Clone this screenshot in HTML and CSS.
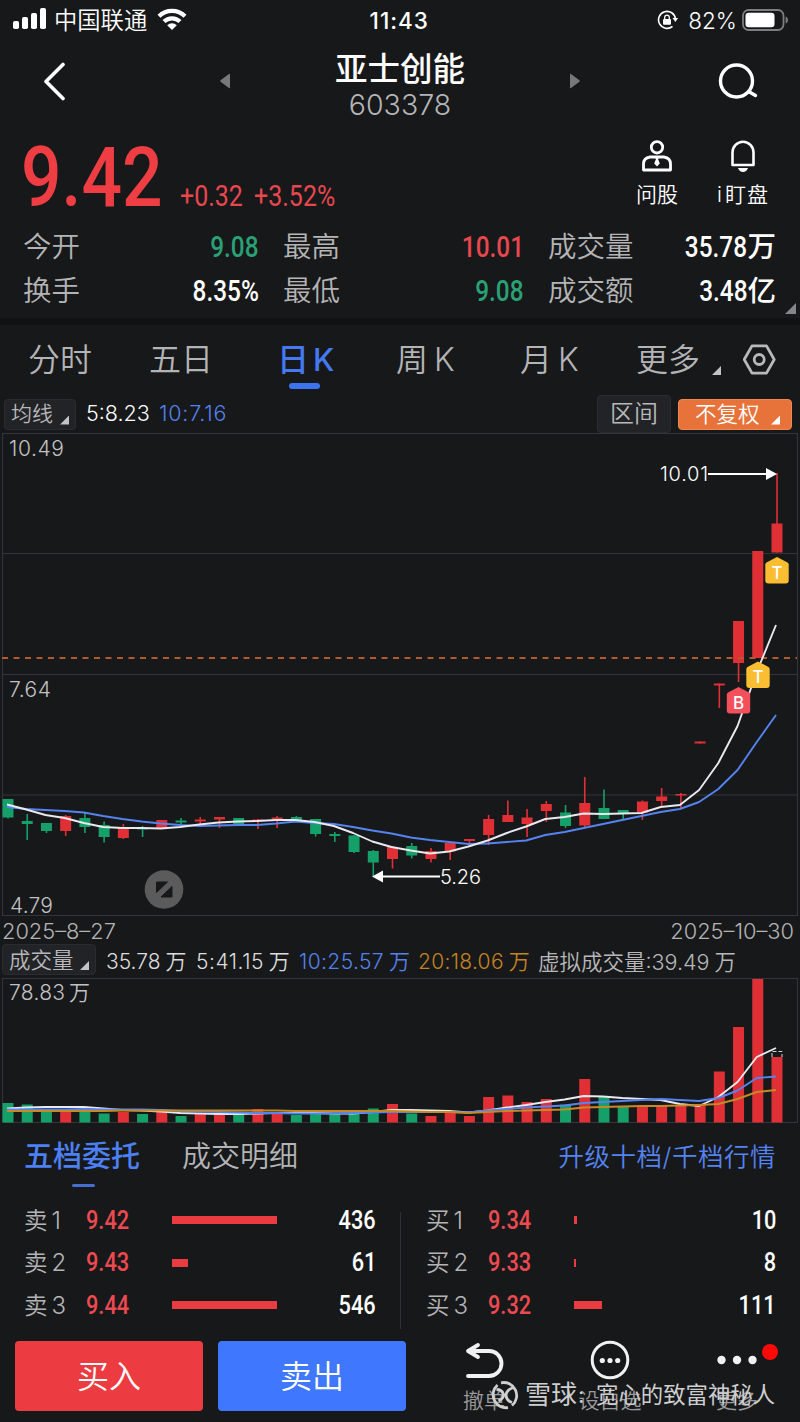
FILE: index.html
```
<!DOCTYPE html>
<html lang="zh-CN">

<head>
  <meta charset="UTF-8">
  <meta name="viewport" content="width=device-width, initial-scale=1.0">
  <title>亚士创能 603378</title>
  <link rel="stylesheet" href="styles.css">
</head>

<body>
  <div class="status-bar">
    <svg class="signal" width="34" height="22" viewBox="0 0 34 22" fill="#fff">
      <rect x="0" y="13" width="6" height="8" rx="1.8" />
      <rect x="9" y="9" width="6" height="12" rx="1.8" />
      <rect x="18" y="5" width="6" height="16" rx="1.8" />
      <rect x="27" y="0" width="6" height="21" rx="1.8" />
    </svg>
    <span class="carrier">中国联通</span>
    <svg class="wifi" width="30" height="23" viewBox="0 0 30 23" fill="none" stroke="#fff" stroke-width="4.2">
      <path d="M2 8.2a18.7 18.7 0 0 1 26 0" />
      <path d="M7 13.6a11.6 11.6 0 0 1 16 0" />
      <path d="M15 22l-4.8-4.8a6.9 6.9 0 0 1 9.6 0z" fill="#fff" stroke="none" />
    </svg>
    <span class="clock">11:43</span>
    <svg class="rotation-lock" width="21" height="20" viewBox="0 0 21 20" fill="none" stroke="#fff" stroke-width="1.6">
      <path d="M18.5 9A8.5 8.5 0 1 0 15.5 16.4" />
      <path d="M15.5 8h5.5l-2.6 4z" fill="#fff" stroke="none" />
      <rect x="6" y="9" width="8" height="5.8" rx="1" fill="#fff" stroke="none" />
      <path d="M7.7 9.5V7.4a2.3 2.3 0 0 1 4.6 0v2.1" stroke-width="1.3" />
    </svg>
    <span class="battery-level">82%</span>
    <svg class="battery" width="47" height="22" viewBox="0 0 47 22">
      <rect x="1" y="1" width="40.5" height="20" rx="5.5" fill="none" stroke="#7c7d7f" stroke-width="1.8" />
      <rect x="3.5" y="3.8" width="29" height="14.4" rx="3.2" fill="#fff" />
      <path d="M43.6 7.5c3.2 1 3.2 6 0 7z" fill="#7c7d7f" />
    </svg>
  </div>

  <header class="header">
    <svg class="back" width="24" height="40" viewBox="0 0 24 40" fill="none" stroke="#fff" stroke-width="3.6" stroke-linecap="round" stroke-linejoin="round">
      <path d="M20 3.500L3 20.500l17 17" />
    </svg>
    <svg class="prev" width="10" height="16" viewBox="0 0 10 16" fill="#77787a"><path d="M10 1.500v13q0 1-1 .4L.6 8.800q-.8-.8 0-1.600L9 1q1-.5 1 .5z" /></svg>
    <div class="stock">
      <h1>亚士创能</h1>
      <div class="code">603378</div>
    </div>
    <svg class="next" width="10" height="16" viewBox="0 0 10 16" fill="#77787a"><path d="M0 1.500v13q0 1 1 .4L9.400 8.800q.8-.8 0-1.600L1 1q-1-.5-1 .5z" /></svg>
    <svg class="search" width="40" height="38" viewBox="0 0 40 38" fill="none" stroke="#fff" stroke-width="3.400" stroke-linecap="round">
      <circle cx="18.500" cy="19" r="16" />
      <path d="M31.500 30l6 3.500" />
    </svg>
  </header>

  <section class="quote">
    <div class="price-row">
      <span class="price din">9.42</span>
      <span class="change din">+0.32 +3.52%</span>
      <div class="quick ask">
        <svg width="32" height="32" viewBox="0 0 32 32" fill="none" stroke="#fff" stroke-width="2.800">
          <circle cx="16" cy="7.300" r="5.700" />
          <path d="M9 17h14q6.500 1 6.500 7v6h-27v-6q0-6 6.500-7z" stroke-linejoin="round" />
          <path d="M14.300 17h3.400l-.6 2.200 1.700 4.300-2.800 3-2.800-3 1.700-4.300z" fill="#fff" stroke="none" />
        </svg>
        <span>问股</span>
      </div>
      <div class="quick watch">
        <svg width="26" height="32" viewBox="0 0 26 32" fill="none" stroke="#fff" stroke-width="2.600">
          <path d="M2.500 25V12.500a10.500 10.800 0 0 1 21 0V25z" stroke-linejoin="round" />
          <path d="M8 28h10q-1.500 4-5 4t-5-4z" fill="#fff" stroke="none" />
        </svg>
        <span>i<em>盯盘</em></span>
      </div>
    </div>
    <dl class="stats">
      <dt>今开</dt><dd class="down"><span class="din">9.08</span></dd>
      <dt>最高</dt><dd class="up"><span class="din">10.01</span></dd>
      <dt>成交量</dt><dd><span class="din">35.78</span>万</dd>
      <dt>换手</dt><dd><span class="din">8.35%</span></dd>
      <dt>最低</dt><dd class="down"><span class="din">9.08</span></dd>
      <dt>成交额</dt><dd><span class="din">3.48</span>亿</dd>
    </dl>
    <i class="corner expand"></i>
  </section>

  <nav class="periods">
    <span>分时</span>
    <span>五日</span>
    <span class="active">日<b>K</b></span>
    <span>周<b>K</b></span>
    <span>月<b>K</b></span>
    <span>更多<i class="corner"></i></span>
    <svg width="34" height="32" viewBox="0 -1 34 32" fill="none" stroke="#b9b9bb" stroke-width="2.800" stroke-linejoin="round">
      <path d="M1.200 14.500L9 .9h14.500l7.700 13.600-7.700 13.600H9z" />
      <circle cx="16.200" cy="14.500" r="5" />
    </svg>
  </nav>

  <div class="ma-bar">
    <button class="chip" type="button">均线<i class="corner"></i></button>
    <span class="ma5">5:8.23</span>
    <span class="ma10">10:7.16</span>
    <button class="chip range" type="button">区间</button>
    <button class="chip adjust" type="button">不复权<i class="corner"></i></button>
  </div>

  <svg class="chart" id="kline" width="800" height="483" viewBox="0 433 800 483"></svg>

  <div class="dates"><span>2025–8–27</span><span>2025–10–30</span></div>

  <div class="vol-bar">
    <button class="chip" type="button">成交量<i class="corner"></i></button>
    <span class="v0">35.78<em>万</em></span>
    <span class="v5">5:41.15<em>万</em></span>
    <span class="v10">10:25.57<em>万</em></span>
    <span class="v20">20:18.06<em>万</em></span>
    <span class="virtual">虚拟成交量:39.49<em>万</em></span>
  </div>

  <svg class="chart" id="volume" width="800" height="145" viewBox="0 978 800 145"></svg>

  <nav class="book-tabs">
    <span class="active">五档委托</span>
    <span class="detail">成交明细</span>
    <a>升级十档/千档行情</a>
  </nav>

  <section class="book">
    <div class="side sell">
      <div class="level"><span>卖<em>1</em></span><span class="din">9.42</span><i class="bar" style="width: 105px"></i><span class="din qty">436</span></div>
      <div class="level"><span>卖<em>2</em></span><span class="din">9.43</span><i class="bar" style="width: 16px"></i><span class="din qty">61</span></div>
      <div class="level"><span>卖<em>3</em></span><span class="din">9.44</span><i class="bar" style="width: 105px"></i><span class="din qty">546</span></div>
    </div>
    <div class="side buy">
      <div class="level"><span>买<em>1</em></span><span class="din">9.34</span><i class="bar" style="width: 3px"></i><span class="din qty">10</span></div>
      <div class="level"><span>买<em>2</em></span><span class="din">9.33</span><i class="bar" style="width: 2px"></i><span class="din qty">8</span></div>
      <div class="level"><span>买<em>3</em></span><span class="din">9.32</span><i class="bar" style="width: 28px"></i><span class="din qty">111</span></div>
    </div>
  </section>

  <footer class="actions">
    <button class="trade buy-btn" type="button">买入</button>
    <button class="trade sell-btn" type="button">卖出</button>
    <div class="tool cancel">
      <svg width="40" height="40" viewBox="0 0 40 40" fill="none" stroke="#f1f1f2" stroke-width="3.800" stroke-linecap="round" stroke-linejoin="round">
        <path d="M14 5L4 11l10 6M4 11h21a12.400 12.400 0 0 1 0 25H4" />
      </svg>
      <span>撤单</span>
    </div>
    <div class="tool settings">
      <svg width="40" height="40" viewBox="0 0 40 40" fill="#f1f1f2">
        <circle cx="20" cy="20" r="17.800" fill="none" stroke="#f1f1f2" stroke-width="3" />
        <circle cx="12.300" cy="20.500" r="2.600" /><circle cx="20" cy="20.500" r="2.600" /><circle cx="27.700" cy="20.500" r="2.600" />
      </svg>
      <span>设自选</span>
    </div>
    <div class="tool more">
      <svg width="62" height="40" viewBox="0 0 62 40" fill="#f1f1f2">
        <circle cx="15.500" cy="20" r="4.200" /><circle cx="31" cy="20" r="4.200" /><circle cx="46.500" cy="20" r="4.200" />
      </svg>
      <i class="dot"></i>
      <span>更多</span>
    </div>
  </footer>

  <div class="watermark">
    <svg width="28" height="30" viewBox="0 0 28 30" fill="none" stroke="currentColor" stroke-width="2.800">
      <path d="M10 2.800A13 13 0 0 1 21 25.500M6.500 5A13 13 0 0 0 17 27.600" />
      <path d="M5.500 9.500q5.500 0 6.800 4.500 1 4-4.800 7M22.500 7.500Q15 10 15 15.500q.5 5 6 7" />
    </svg>
    <span class="brand">雪球</span><span class="colon">:</span><span class="author">宽心的致富神秘人</span>
  </div>

  <script src="script.js"></script>
</body>

</html>
```
FILE: styles.css
```
* {
  box-sizing: border-box;
}

body {
  margin: 0;
  width: 800px;
  height: 1422px;
  overflow: hidden;
  position: relative;
  background: #17181a;
  color: #fff;
  font-family: Inter, "Noto Sans CJK SC", sans-serif;
  font-weight: 350;
}

svg {
  display: block;
  flex: none;
}

i,
em {
  font-style: normal;
}

button {
  font: inherit;
  border: 0;
  padding: 0;
}

/* narrow figures */
.din {
  display: inline-block;
  font-family: Roboto, sans-serif;
  font-weight: 500;
  transform: scaleX(.86);
  transform-origin: left center;
}

.up {
  color: #e8474e;
}

.down {
  color: #2aa175;
}

.corner {
  display: block;
  width: 9px;
  height: 9px;
  background: #c4c4c6;
  clip-path: polygon(100% 0, 100% 100%, 0 100%);
}

/* status bar */
.status-bar {
  height: 40px;
  padding: 0 11px 0 13px;
  display: flex;
  align-items: center;
}

.signal {
  margin-top: -2px;
}

.carrier {
  margin: -2px 0 0 7px;
  width: 96px;
  font-size: 23.300px;
}

.wifi {
  margin-left: 7px;
  margin-top: -1px;
}

.clock {
  margin-left: 183px;
  width: 61px;
  font-size: 22.500px;
  font-weight: 500;
  letter-spacing: 1px;
  white-space: nowrap;
}

.rotation-lock {
  margin-left: 227px;
}

.battery-level {
  margin-left: 10px;
  width: 54px;
  font-size: 22.500px;
  white-space: nowrap;
}

.battery {
  margin-top: -1px;
}

/* title */
.header {
  height: 85px;
  display: flex;
  align-items: center;
  padding: 0 42px 4px 43px;
}

.prev {
  margin-left: 153px;
}

.stock {
  width: 340px;
  margin-top: 11px;
  text-align: center;
}

.stock h1 {
  margin: 0;
  font-size: 32.500px;
  line-height: 38px;
  font-weight: 500;
}

.stock .code {
  font-size: 28.500px;
  font-weight: 300;
  line-height: 32px;
  color: #b5b5b7;
}

.search {
  margin-left: auto;
}

/* quote */
.quote {
  height: 200px;
  border-bottom: 7px solid #111214;
  position: relative;
}

.price-row {
  height: 99px;
  display: flex;
}

.price {
  margin-left: 21px;
  width: 159px;
  font-size: 84px;
  line-height: 105px;
  color: #ee3e43;
  font-weight: 500;
  transform: scaleX(.85);
}

.change {
  width: 188px;
  font-size: 29px;
  line-height: 142px;
  color: #e8474e;
  font-weight: 400;
  word-spacing: 6px;
  transform: scaleX(.86);
  white-space: nowrap;
}

.quick {
  width: 60px;
  padding-top: 15px;
  display: flex;
  flex-direction: column;
  align-items: center;
  font-size: 21px;
  line-height: 28px;
  white-space: nowrap;
}

.quick span {
  margin-top: 9px;
}

.quick em {
  margin-left: 3px;
  letter-spacing: 1px;
}

.ask {
  margin-left: 259px;
}

.watch {
  margin-left: 26px;
}

.stats {
  margin: 0;
  padding: 1px 24px 0 23px;
  display: grid;
  grid-template-columns: 86px 150px 110px 155px 112px 140px;
  grid-template-rows: 44px 44px;
  font-size: 28.500px;
  line-height: 44px;
  white-space: nowrap;
}

.stats dt {
  color: #b4b4b6;
}

.stats dt:not(:nth-of-type(3n + 1)) {
  padding-left: 24px;
}

.stats dd {
  margin: 0;
  text-align: right;
  font-weight: 500;
}

.stats .din {
  font-size: 29px;
  transform: scaleX(.84);
  transform-origin: right center;
}

.expand {
  position: absolute;
  right: 4px;
  bottom: 4px;
  width: 11px;
  height: 11px;
  background: #85868a;
}

/* period tabs */
.periods {
  height: 70px;
  padding-left: 28px;
  display: grid;
  grid-template-columns: 121px 128px 119px 124px 116px 107px 32px;
  align-items: center;
  font-size: 32px;
  color: #b4b4b6;
}

.periods span {
  display: flex;
  position: relative;
  height: 70px;
  line-height: 70px;
}

.periods b {
  margin-left: 6px;
  font-weight: 350;
  font-size: 32px;
}

.periods .active {
  color: #4479f2;
  font-weight: 500;
}

.periods .active b {
  margin-left: 4px;
  font-size: 31px;
  font-weight: 500;
}

.periods .active::after {
  content: "";
  position: absolute;
  left: 12px;
  bottom: 6px;
  width: 31px;
  height: 6px;
  border-radius: 3px;
  background: #3b74ee;
}

.periods .corner {
  margin: 41px 0 0 12px;
}

/* indicator rows */
.chip {
  position: relative;
  display: flex;
  align-items: center;
  height: 31px;
  padding: 0 6px;
  border: 1px solid #2b2c30;
  border-radius: 4px;
  background: #222327;
  color: #b8b8ba;
  font-size: 21px;
  line-height: 28px;
  white-space: nowrap;
}

.chip .corner {
  margin: 12px 0 0 auto;
}

.ma-bar {
  height: 38px;
  padding: 0 8px 0 4px;
  display: flex;
  align-items: center;
  font-size: 21.500px;
}

.ma-bar .chip {
  width: 72px;
}

.ma5,
.ma10 {
  margin-top: -2px;
}

.ma5 {
  margin-left: 10px;
  width: 73px;
}

.ma10 {
  color: #5382ee;
  letter-spacing: .8px;
}

.ma-bar .range {
  margin-left: auto;
  width: 74px;
  height: 38px;
  padding: 0;
  justify-content: center;
  font-size: 24px;
}

.ma-bar .adjust {
  margin-left: 7px;
  width: 114px;
  padding: 0 11px 0 16px;
  border-color: #ee8953;
  background: #e8733a;
  color: #fff;
  font-size: 21.500px;
}

.adjust .corner {
  background: #fff;
}

.dates {
  height: 28px;
  padding: 0 6px 0 2px;
  display: flex;
  justify-content: space-between;
  font-size: 21.800px;
  line-height: 31px;
  color: #b4b4b6;
}

.vol-bar {
  height: 34px;
  padding-left: 2px;
  display: flex;
  font-size: 21px;
  line-height: 36px;
  white-space: nowrap;
}

.vol-bar .chip {
  width: 94px;
  height: 31px;
  margin-right: 10px;
  font-size: 21.500px;
}

.vol-bar span {
  font-size: 21px;
  color: #dcdcde;
}

.vol-bar em {
  margin-left: 5px;
}

.vol-bar .v0 { width: 90px; }
.vol-bar .v5 { width: 103px; letter-spacing: .5px; }
.vol-bar .v10 { width: 119px; letter-spacing: .4px; color: #5382ee; }
.vol-bar .v20 { width: 120px; letter-spacing: .3px; color: #c58322; }
.vol-bar .virtual { color: #b8b8ba; font-size: 21.500px; }

.chart text {
  font-family: Inter, "Noto Sans CJK SC", sans-serif;
  font-size: 21px;
  fill: #c2c2c4;
}

.chart .mark {
  font-size: 20px;
  fill: #fff;
}

.chart .badge {
  font-size: 17px;
  font-weight: 500;
  fill: #fff;
  text-anchor: middle;
}

/* order book */
.book-tabs {
  height: 75px;
  padding: 0 24px;
  display: flex;
  font-size: 29px;
  line-height: 68px;
  color: #b4b4b6;
}

.book-tabs .active {
  position: relative;
  color: #4c80f4;
  font-weight: 500;
}

.book-tabs .active::after {
  content: "";
  position: absolute;
  left: 48px;
  bottom: 11px;
  width: 23px;
  height: 3px;
  border-radius: 2px;
  background: #446fd0;
}

.detail {
  margin-left: 42px;
}

.book-tabs a {
  margin-left: auto;
  font-size: 25.500px;
  letter-spacing: .5px;
  color: #5484f2;
}

.book {
  height: 137px;
  display: flex;
}

.side {
  width: 400px;
  padding: 1px 24px;
}

.buy {
  padding-left: 26px;
  position: relative;
}

.buy::before {
  content: "";
  position: absolute;
  left: 0;
  top: 14px;
  width: 1px;
  height: 117px;
  background: #303134;
}

.level {
  height: 42.500px;
  display: flex;
  align-items: center;
  font-size: 23.500px;
  color: #b4b4b6;
}

.level > span:first-child {
  width: 62px;
  margin-top: -3px;
}

.level em {
  margin-left: 4px;
  font-size: 24px;
}

.level .din {
  width: 86px;
  font-size: 25px;
  color: #ec4a50;
  transform: scaleX(.87);
}

.bar {
  height: 8px;
  background: #ea3c40;
}

.level .qty {
  width: auto;
  margin-left: auto;
  color: #fff;
  transform-origin: right center;
}

/* bottom bar */
.actions {
  height: 87px;
  padding: 6px 0 0 15px;
  display: flex;
}

.trade {
  width: 188px;
  height: 70px;
  margin-right: 15px;
  border-radius: 4px;
  color: #fff;
  font-size: 32px;
  line-height: 72px;
}

.buy-btn {
  background: #ec3c41;
}

.sell-btn {
  background: #3f78ff;
}

.tool {
  position: relative;
  display: flex;
  flex-direction: column;
  align-items: center;
  margin-top: -1px;
  font-size: 21px;
  line-height: 28px;
  color: #9b9b9d;
  white-space: nowrap;
}

.tool span {
  margin-top: 7px;
}

.cancel {
  margin-left: 41px;
  width: 44px;
}

.settings {
  margin-left: 64px;
  width: 80px;
}

.more {
  margin-left: 56px;
  width: 62px;
}

.dot {
  position: absolute;
  right: -10px;
  top: 4px;
  width: 16px;
  height: 16px;
  border-radius: 50%;
  background: #ff0908;
}

.watermark {
  position: absolute;
  left: 491px;
  top: 1380px;
  display: flex;
  align-items: center;
  height: 30px;
  color: #cfcfd0;
  line-height: 26px;
  font-weight: 400;
  white-space: nowrap;
}

.brand {
  margin: -1px 0 0 6px;
  width: 53px;
  font-size: 26px;
}

.colon {
  width: 18px;
  font-size: 22px;
}

.author {
  margin-top: -1px;
  font-size: 22.400px;
}
```
FILE: script.js
```
const RED = '#e03036'
const GREEN = '#159f69'
const STEP = 19.225
const xAt = i => 8 + i * STEP

// [direction, body top, body bottom, high, low, volume top]
const candles = [
  ['g', 799, 817.5, 799, 818.5, 1103], ['g', 821, 824, 814, 840, 1104.5], ['g', 823, 831, 823, 833, 1112],
  ['r', 816, 831, 815, 836, 1111], ['g', 818, 827, 812.5, 833, 1112], ['g', 825, 837, 821.5, 842.5, 1113.5],
  ['r', 827, 838, 824, 839, 1112], ['g', 828, 829.5, 826, 837, 1114], ['r', 820, 828, 820, 828, 1112],
  ['g', 820.5, 822.5, 818, 824.5, 1116], ['r', 819.5, 821.5, 817, 824, 1114], ['r', 817, 819.5, 817, 828, 1114],
  ['g', 818, 824, 818, 824, 1114], ['r', 819.5, 821, 819, 829, 1109], ['r', 817.5, 819.5, 816, 828, 1112],
  ['g', 817, 821, 816, 822, 1115], ['g', 819, 834, 819, 836.5, 1113], ['g', 834, 836, 832, 842, 1114],
  ['g', 835.5, 852, 835, 853, 1112], ['g', 851, 862.5, 850, 876, 1108.5], ['r', 847, 859, 846, 868.5, 1104],
  ['g', 846, 855.5, 843, 858.5, 1113.5], ['r', 851, 859, 848, 862.5, 1116], ['r', 843, 851.5, 843, 860, 1113],
  ['r', 839, 841, 839, 843, 1116], ['r', 819, 835, 815, 845, 1097], ['r', 815, 822, 800.5, 822, 1095.5],
  ['r', 817.5, 824, 809, 837, 1102], ['r', 804, 811, 801, 822, 1099], ['g', 812.5, 826, 805, 828, 1104.5],
  ['r', 803, 825.5, 777, 828, 1079], ['g', 808, 819, 789.5, 819, 1097], ['g', 810, 814, 810, 820, 1107],
  ['r', 801.5, 812.5, 800.5, 820, 1106], ['r', 796.5, 801, 788, 806, 1106], ['r', 794, 795.5, 793, 808, 1105],
  ['r', 741.5, 743.5, 741.5, 743.5, 1104], ['r', 683.5, 685.5, 683.5, 708, 1071.5], ['r', 621, 663, 621, 682, 1027],
  ['r', 551, 658, 551, 658, 979], ['r', 523.5, 552.5, 473, 552.5, 1057]
]

const ma5 = [804.5, 809.5, 815, 818, 823, 827, 828, 828, 828.5, 827, 824.5, 822.5, 821.5, 821, 820, 820, 822, 826, 833, 841.5, 847, 850.5, 853.5, 851.5, 846.5, 840.5, 833, 826.5, 819, 817, 813.5, 814, 813.5, 813, 807, 805, 790, 763, 726, 672, 625]
const ma10 = [807, 809, 810, 811, 812.5, 816, 819, 821.5, 823.5, 825, 826, 825.5, 825, 825, 823.5, 821.5, 823, 824, 827, 830.5, 833.5, 837.5, 840, 842, 844, 843.5, 842, 840.5, 835, 832, 828, 824, 820, 816, 812, 809, 802, 789, 770, 742, 715]
const vol5 = [1108.5, 1107.5, 1107, 1107, 1107, 1108.5, 1110, 1110.5, 1111.5, 1113, 1113.5, 1114, 1114, 1113.5, 1113, 1113, 1113, 1113.5, 1113.5, 1112, 1110, 1110, 1110.5, 1111, 1112.5, 1110.5, 1107.5, 1105, 1102, 1099.5, 1096, 1096.5, 1098, 1099, 1100, 1104, 1106, 1097, 1082, 1057, 1048]
const vol10 = [1109.5, 1109.5, 1109.5, 1109.5, 1109, 1109.5, 1109.5, 1109.5, 1110, 1111, 1111.5, 1112, 1112.5, 1113, 1113, 1113.5, 1113.5, 1113.5, 1113, 1112.5, 1112, 1112, 1112, 1112, 1112.5, 1110.5, 1109, 1107.5, 1106.5, 1105.5, 1103, 1102, 1101, 1100, 1099, 1100, 1101, 1098, 1090.5, 1078, 1076.5]
const vol20 = [1111, 1111, 1111, 1111, 1111, 1111, 1110.5, 1110.5, 1110.5, 1110.5, 1110.5, 1110.5, 1110.5, 1110.5, 1110.5, 1111, 1111, 1111, 1111, 1111, 1111, 1111.5, 1112, 1112, 1113, 1112, 1111, 1110.5, 1110, 1109.5, 1107.5, 1107, 1106.5, 1106, 1106, 1105.5, 1105, 1104, 1099, 1092, 1090]

const color = c => c[0] === 'r' ? RED : GREEN
const rect = (x, y, w, h, fill) => `<rect x="${x}" y="${y}" width="${w}" height="${h}" fill="${fill}"/>`
const line = (points, stroke) =>
  `<polyline points="${points.map((y, i) => `${xAt(i) - 1},${y}`).join(' ')}" fill="none" stroke="${stroke}" stroke-width="1.9" stroke-linejoin="round"/>`
const grid = (ys, top, bottom) =>
  `<path d="${ys.map(y => `M2 ${y}H798`).join('')}M2.500 ${top}V${bottom}M797.500 ${top}V${bottom}" stroke="#343538" fill="none"/>`

// pentagon marker with a letter, (x, y) is its tip
const marker = (x, y, fill, letter) => `
  <path d="M0 0l10.500 5.500q1.200.8 1.200 2V23.500q0 3-3 3h-17.400q-3 0-3-3V7.500q0-1.200 1.200-2z" fill="${fill}" transform="translate(${x} ${y})"/>
  <text class="badge" x="${x}" y="${y + 21.5}">${letter}</text>`

function drawKline() {
  const bodies = candles.map((c, i) => {
    const x = xAt(i)
    return rect(x - 0.8, c[3], 1.6, c[4] - c[3], color(c)) + rect(x - 5.5, c[1], 11, c[2] - c[1], color(c))
  }).join('')

  document.getElementById('kline').innerHTML = `
    ${grid([433.5, 553.5, 674.5, 795, 915.5], 433, 916)}
    ${bodies}
    <path d="M2 658H797" stroke="#b4592f" stroke-width="1.800" stroke-dasharray="6 5.500" fill="none"/>
    ${line(ma10, '#5584f0')}
    ${line(ma5, '#e9e9ef')}
    <path d="M708 474H768M382 876.500H440" stroke="#fff" stroke-width="1.800"/>
    <path d="M766 468l11 6-11 6zM383 870.500l-11 6 11 6z" fill="#fff"/>
    <text class="mark" x="660" y="481" textLength="48">10.01</text>
    <text class="mark" x="440" y="884" textLength="41">5.26</text>
    <text x="9" y="455.500" textLength="55">10.49</text>
    <text x="9" y="697" textLength="42">7.64</text>
    <text x="10" y="912.500" textLength="43">4.79</text>
    ${marker(738.5, 687, '#f4505c', 'B')}
    ${marker(758, 661.5, '#fbbd31', 'T')}
    ${marker(777, 557, '#fbbd31', 'T')}
    <circle cx="164" cy="889.500" r="19.300" fill="#5b5b5c"/>
    <path d="M156.500 882h11l-11 10.500zM172 886.500V897h-11z" fill="#17181a" stroke="#17181a"/>`
}

function drawVolume() {
  const bars = candles.map((c, i) => rect(xAt(i) - 5.5, c[5], 11, 1122.5 - c[5], color(c))).join('')
  document.getElementById('volume').innerHTML = `
    ${grid([978.5, 1122.5], 978, 1123)}
    ${bars}
    <path d="M772 1057v-5.500h10v5.500" fill="none" stroke="#d5d5d6" stroke-dasharray="4 2"/>
    ${line(vol5, '#e9e9ef')}
    ${line(vol10, '#5584f0')}
    ${line(vol20, '#c58a24')}
    <text x="9" y="1000" textLength="56">78.83</text>
    <text x="69" y="1000">万</text>`
}

drawKline()
drawVolume()
```
